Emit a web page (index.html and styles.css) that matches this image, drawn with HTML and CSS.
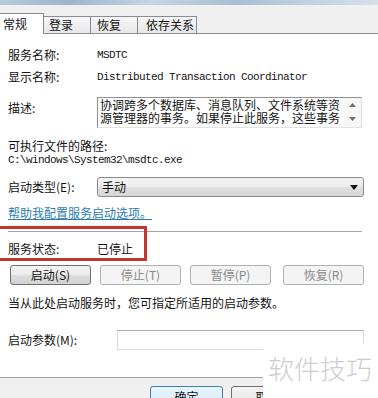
FILE: index.html
```html
<!DOCTYPE html>
<html lang="zh-CN">
<head>
<meta charset="utf-8">
<title>MSDTC 属性</title>
<link rel="stylesheet" href="styles.css">
</head>
<body>
<div class="win">
  <div class="titlebar"></div>
  <div class="tabs">
    <div class="tab active w1">常规</div>
    <div class="tab w2">登录</div>
    <div class="tab w3">恢复</div>
    <div class="tab w4">依存关系</div>
  </div>
  <div class="panel">
    <div class="row r-name"><span class="label">服务名称:</span><span class="mono">MSDTC</span></div>
    <div class="row r-disp"><span class="label">显示名称:</span><span class="mono">Distributed Transaction Coordinator</span></div>
    <div class="row r-desc">
      <span class="label desc-label">描述:</span>
      <div class="desc">
        <div class="desc-text">
          <div>协调跨多个数据库、消息队列、文件系统等资</div>
          <div>源管理器的事务。如果停止此服务，这些事务</div>
        </div>
        <div class="vscroll">
          <svg width="7" height="4" viewBox="0 0 7 4"><path d="M0 4 L3.5 0 L7 4 Z" fill="#6d6d6d"/></svg>
          <svg width="7" height="4" viewBox="0 0 7 4"><path d="M0 0 L7 0 L3.5 4 Z" fill="#6d6d6d"/></svg>
        </div>
      </div>
    </div>
    <div class="exe-label">可执行文件的路径:</div>
    <div class="exe-path mono">C:\windows\System32\msdtc.exe</div>
    <div class="row r-type">
      <span class="label">启动类型(E):</span>
      <div class="select">
        <span>手动</span>
        <svg width="8" height="5" viewBox="0 0 8 5"><path d="M0 0 L8 0 L4 5 Z" fill="#111"/></svg>
      </div>
    </div>
    <div class="link">帮助我配置服务启动选项。</div>
    <div class="sep"></div>
    <div class="row r-status"><span class="label">服务状态:</span><span>已停止</span></div>
    <div class="btn-row">
      <div class="btn">启动(S)</div>
      <div class="btn disabled">停止(T)</div>
      <div class="btn disabled">暂停(P)</div>
      <div class="btn disabled last">恢复(R)</div>
    </div>
    <div class="hint">当从此处启动服务时，您可指定所适用的启动参数。</div>
    <div class="row r-param">
      <span class="label param-label">启动参数(M):</span>
      <div class="input"></div>
    </div>
  </div>
  <div class="footer">
    <div class="fbtn default">确定</div>
    <div class="fbtn">取消</div>
  </div>
  <div class="redbox"></div>
  <div class="watermark">软件技巧</div>
</div>
</body>
</html>
```
FILE: styles.css
```css
* { box-sizing: border-box; }
body {
  margin: 0;
  width: 378px;
  height: 398px;
  overflow: hidden;
  background: #fff;
  font-family: "Noto Sans CJK SC", "Noto Sans", sans-serif;
  font-size: 12px;
  color: #141414;
}
.win {
  position: relative;
  width: 378px;
  height: 398px;
  background: #f0f0f0;
  overflow: hidden;
}
.titlebar {
  height: 5px;
  background: linear-gradient(90deg, #b7cadd 0%, #9db4cd 18%, #c6d5e5 40%, #a9bed4 62%, #bfd0e2 80%, #d5e0eb 100%);
}
.tabs {
  height: 28px;
  display: flex;
  align-items: flex-end;
  background: #f0f0f0;
}
.tab {
  height: 17px;
  border-top: 1px solid #898c95;
  border-left: 1px solid #898c95;
  background: linear-gradient(#f7f7f7, #e7e7e7);
  line-height: 16px;
  padding-left: 5px;
  white-space: nowrap;
}
.tab:last-child { border-right: 1px solid #898c95; }
.tab.active {
  height: 21px;
  line-height: 20px;
  background: #fff;
  border-right: 1px solid #898c95;
  margin-left: -1px;
  margin-bottom: -1px;
  padding-left: 3px;
  position: relative;
  z-index: 1;
}
.w1 { width: 45px; }
.w2 { width: 46px; }
.w3 { width: 47px; padding-left: 6px; }
.w4 { width: 60px; padding-left: 8px; }
.tab.w2 { border-left: none; padding-left: 5px; }
.panel {
  height: 344px;
  background: #fff;
  border-top: 1px solid #898c95;
  padding: 13px 8px 0;
}
.row {
  display: flex;
  align-items: center;
  line-height: 16px;
}
.label { width: 89px; flex: none; }
.mono {
  font-family: "Liberation Mono", "DejaVu Sans Mono", monospace;
  font-size: 11px;
  letter-spacing: -0.6px;
}
.r-disp { margin-top: 6px; }
.r-desc { margin-top: 12px; align-items: flex-start; }
.desc-label { padding-top: 3px; }
.desc {
  width: 265px;
  height: 31px;
  display: flex;
  border-top: 1px solid #8f9090;
  border-left: 1px solid #8f9090;
  border-right: 1px solid #e2e2e2;
  border-bottom: 1px solid #e2e2e2;
}
.desc-text {
  flex: 1;
  padding-left: 2px;
  line-height: 13px;
  white-space: nowrap;
}
.vscroll {
  width: 17px;
  flex: none;
  display: flex;
  flex-direction: column;
  justify-content: space-between;
  align-items: center;
  padding: 5px 0 6px;
  background: #f7f7f7;
}
.exe-label { margin-top: 11px; line-height: 14px; }
.exe-path { line-height: 14px; }
.r-type { margin-top: 10px; }
.select {
  width: 267px;
  height: 20px;
  border: 1px solid #8a8a8a;
  border-radius: 3px;
  background: linear-gradient(#f4f4f4 0%, #ececec 50%, #e0e0e0 51%, #d6d6d6 100%);
  display: flex;
  align-items: center;
  justify-content: space-between;
  padding: 0 5px 0 4px;
}
.link {
  margin-top: 8px;
  line-height: 16px;
  color: #2b7db0;
  text-decoration: underline;
}
.sep {
  margin-top: 10px;
  width: 354px;
  height: 1px;
  background: #a5a5a5;
}
.r-status { margin-top: 9px; }
.btn-row {
  margin-top: 8px;
  margin-left: 2px;
  display: flex;
  gap: 9px;
}
.btn {
  width: 81px;
  height: 20px;
  border: 1px solid #707070;
  border-radius: 3px;
  background: linear-gradient(#f3f3f3 0%, #ebebeb 50%, #dedede 51%, #d2d2d2 100%);
  text-align: center;
  line-height: 18px;
}
.btn.disabled {
  border-color: #adb2b5;
  background: #f4f4f4;
  color: #8a8a8a;
}
.btn.last { margin-left: 3px; }
.hint { margin-top: 10px; line-height: 16px; white-space: nowrap; }
.r-param { margin-top: 19px; }
.param-label { width: 109px; }
.input {
  width: 247px;
  height: 20px;
  border: 1px solid #d5d8dc;
  border-top-color: #abadb3;
}
.footer {
  height: 21px;
  border-top: 1px solid #a0a0a0;
  background: #f0f0f0;
  display: flex;
  gap: 8px;
  padding: 8px 0 0 150px;
}
.fbtn {
  width: 73px;
  height: 23px;
  border: 1px solid #707070;
  border-radius: 3px;
  background: linear-gradient(#f3f3f3 0%, #ebebeb 50%, #dedede 51%, #d2d2d2 100%);
  text-align: center;
  line-height: 20px;
  flex: none;
}
.fbtn.default {
  border-color: #3c7fb1;
  background: linear-gradient(#eaf6fd 0%, #d9f0fc 50%, #bee6fd 51%, #a7d9f5 100%);
}
.redbox {
  position: absolute;
  left: -3px;
  top: 226px;
  width: 150px;
  height: 35px;
  border: 3px solid #c4352e;
}
.watermark {
  position: absolute;
  left: 263px;
  top: 343px;
  right: 0;
  bottom: 0;
  background: #fff;
  color: #cdcdcd;
  font-size: 26px;
  font-weight: 300;
  line-height: 26px;
  padding: 12px 0 0 5px;
  white-space: nowrap;
}
```
